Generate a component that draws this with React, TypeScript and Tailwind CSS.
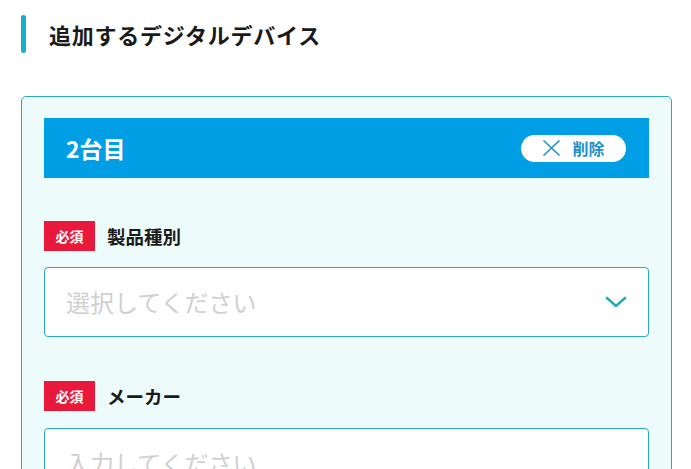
import React from "react";

const font = { fontFamily: '"Noto Sans CJK JP", "Noto Sans", sans-serif' };

function Badge() {
  return (
    <span className="flex h-[30px] w-[51px] items-center justify-center bg-[#e8193a] text-[14px] font-bold leading-none text-white">
      必須
    </span>
  );
}

export default function App() {
  return (
    <div className="h-[469px] w-[691px] overflow-hidden bg-white" style={font}>
      <div className="flex items-center pl-[21px] pt-[15px]">
        <div className="h-[38px] w-[5px] rounded-full bg-[#14b1c4]" />
        <h2 className="ml-[23px] text-[22px] font-bold leading-none tracking-[0.75px] text-[#1a1a1a]">
          追加するデジタルデバイス
        </h2>
      </div>
      <div className="ml-[21px] mt-[43px] w-[651px] rounded-[5px] border border-[#2aa9b7] bg-[#eefbfb] px-[22px] pt-[21px] pb-[40px]">
        <div className="flex h-[60px] items-center justify-between bg-[#009fe5] pl-[22px] pr-[23px]">
          <span className="text-[23px] font-bold leading-none text-white">2台目</span>
          <button className="flex h-[27px] w-[105px] items-center justify-center gap-[11px] rounded-full bg-white text-[16px] font-bold text-[#1d8fcb]">
            <svg width="19" height="16" viewBox="0 0 19 16" fill="none" stroke="#1d8fcb" strokeWidth="1.5">
              <path d="M1.5 0.5 L17.5 15.5 M17.5 0.5 L1.5 15.5" />
            </svg>
            <span className="leading-none">削除</span>
          </button>
        </div>

        <div className="mt-[43px] flex items-center gap-[12px]">
          <Badge />
          <span className="text-[18.5px] font-bold leading-none text-[#1a1a1a]">製品種別</span>
        </div>
        <div className="mt-[16px] flex h-[70px] items-center justify-between rounded-[4px] border border-[#2aa9b7] bg-white pl-[21px] pr-[21px]">
          <span className="text-[24px] leading-none text-[#d0d0d0]">選択してください</span>
          <svg width="22" height="12" viewBox="0 0 22 12" fill="none" stroke="#2aa9b7" strokeWidth="2.6" strokeLinecap="round" strokeLinejoin="round">
            <path d="M2 2 L11 10 L20 2" />
          </svg>
        </div>

        <div className="mt-[44px] flex items-center gap-[12px]">
          <Badge />
          <span className="text-[18.5px] font-bold leading-none text-[#1a1a1a]">メーカー</span>
        </div>
        <div className="mt-[17px] flex h-[70px] items-center rounded-[4px] border border-[#2aa9b7] bg-white pl-[21px]">
          <span className="text-[24px] leading-none text-[#d0d0d0]">入力してください</span>
        </div>
      </div>
    </div>
  );
}
